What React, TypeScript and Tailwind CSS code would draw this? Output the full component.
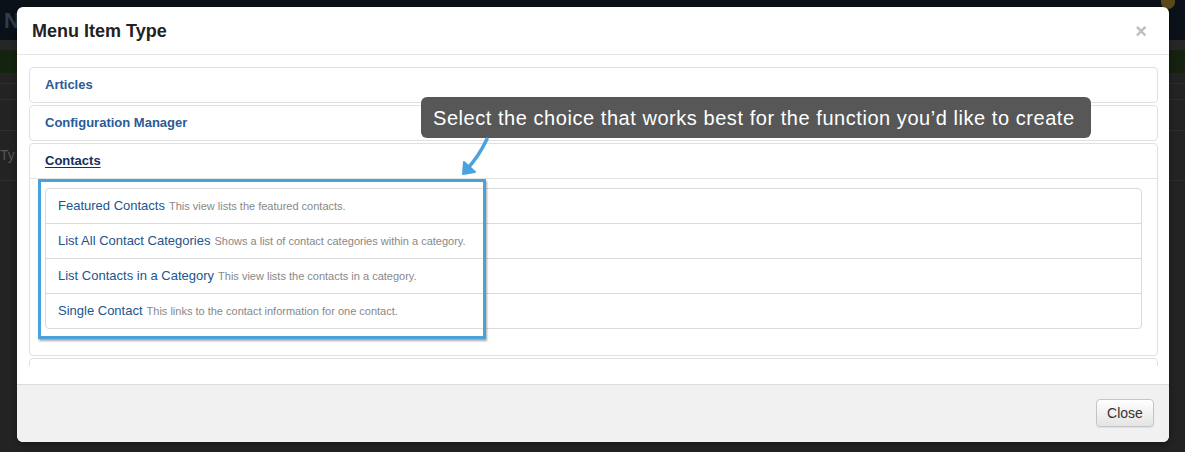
import React from "react";

const font = { fontFamily: '"Liberation Sans", Arial, sans-serif' };

interface IViewItem {
  title: string;
  desc: string;
}

const contactViews: IViewItem[] = [
  { title: "Featured Contacts", desc: "This view lists the featured contacts." },
  { title: "List All Contact Categories", desc: "Shows a list of contact categories within a category." },
  { title: "List Contacts in a Category", desc: "This view lists the contacts in a category." },
  { title: "Single Contact", desc: "This links to the contact information for one contact." },
];

function PanelHead({ label, open }: { label: string; open?: boolean }) {
  return (
    <div
      className={
        "flex items-center pl-[15px] text-[13px] font-bold " +
        (open
          ? "h-[35px] border-b border-[#e3e3e3] text-[#14305c] underline underline-offset-2"
          : "h-[34px] text-[#2a5b96]")
      }
    >
      {label}
    </div>
  );
}

function Backdrop() {
  return (
    <div className="absolute inset-0 flex flex-col bg-[#232323]">
      <div className="h-[40px] bg-[#0b1119] flex items-center justify-between pl-[4px]">
        <span className="text-[22px] text-[#2e3d4f] font-bold">N</span>
        <div className="w-[14px] h-[9px] self-start mr-[10px] rounded-b-full bg-[#5a4a1a]" />
      </div>
      <div className="h-[10px] bg-[#262626]" />
      <div className="h-[23px] bg-[#15220f]" />
      <div className="h-[11px] border-b border-[#2e2e2e]" />
      <div className="h-[16px] border-b border-[#2e2e2e]" />
      <div className="h-[31px] border-b border-[#2e2e2e]" />
      <div className="h-[50px] border-b border-[#2e2e2e] flex items-center">
        <span className="text-[14px] text-[#555]">Ty</span>
      </div>
    </div>
  );
}

export default function App() {
  return (
    <div className="relative w-[1185px] h-[452px] overflow-hidden" style={font}>
      <Backdrop />

      {/* modal */}
      <div className="absolute left-[17px] top-[7px] w-[1152px] h-[435px] bg-white rounded-[6px] flex flex-col overflow-hidden shadow-[0_3px_7px_rgba(0,0,0,0.3)]">
        <div className="h-[48px] shrink-0 border-b border-[#e5e5e5] flex items-center justify-between pl-[15px] pr-[22px]">
          <h3 className="text-[18px] font-bold text-[#222] pt-[1px]">Menu Item Type</h3>
          <span className="text-[20px] font-bold text-[#bdbdbd] leading-none">×</span>
        </div>

        <div className="h-[329px] shrink-0 pt-[12px] pb-[18px] pl-[12px] pr-[11px]">
          <div className="h-full overflow-hidden flex flex-col gap-[2px]">
            <div className="border border-[#e0e0e0] rounded-[4px]">
              <PanelHead label="Articles" />
            </div>
            <div className="border border-[#e0e0e0] rounded-[4px]">
              <PanelHead label="Configuration Manager" />
            </div>
            <div className="border border-[#e0e0e0] rounded-[4px] shrink-0">
              <PanelHead label="Contacts" open />
              <div className="pt-[9px] pb-[26px] px-[15px]">
                <ul className="border border-[#dadada] rounded-[4px]">
                  {contactViews.map((v, i) => (
                    <li
                      key={v.title}
                      className={
                        "flex items-center pl-[12px] gap-[4px] " +
                        (i > 0 ? "h-[35px] border-t border-[#dadada]" : "h-[34px]")
                      }
                    >
                      <span className="text-[13px] text-[#205590]">{v.title}</span>
                      <span className="text-[11px] text-[#888] pt-[1px]">{v.desc}</span>
                    </li>
                  ))}
                </ul>
              </div>
            </div>
            <div className="border border-[#e0e0e0] rounded-[4px] h-[40px] shrink-0" />
          </div>
        </div>

        <div className="flex-1 bg-[#f1f1f1] border-t border-[#dcdcdc] flex items-start justify-end pt-[14px] pr-[15px]">
          <button className="w-[58px] h-[28px] rounded-[4px] border border-[#c5c5c5] bg-gradient-to-b from-white to-[#e4e4e4] text-[14px] text-[#333] shadow-[0_1px_1px_rgba(0,0,0,0.08)]">
            Close
          </button>
        </div>
      </div>

      {/* annotation: highlight box */}
      <div className="absolute left-[38px] top-[179px] w-[448px] h-[160px] border-[3px] border-[#4ba1da] shadow-[1px_2px_2px_rgba(0,0,0,0.35)]" />

      {/* annotation: tooltip */}
      <div className="absolute left-[421px] top-[97px] w-[670px] h-[41px] rounded-[6px] bg-[#575757] flex items-center pl-[12px]">
        <span className="text-[20px] tracking-[0.55px] text-white whitespace-nowrap">
          Select the choice that works best for the function you’d like to create
        </span>
      </div>

      {/* annotation: arrow */}
      <svg className="absolute left-0 top-0" width="1185" height="452" fill="none">
        <path d="M487 139 Q478 158 466 170" stroke="#4aa3df" strokeWidth="3.5" strokeLinecap="round" />
        <path d="M464 162 L463 174 L475 172 Z" fill="#4aa3df" stroke="#4aa3df" strokeWidth="2" strokeLinejoin="round" />
      </svg>
    </div>
  );
}
